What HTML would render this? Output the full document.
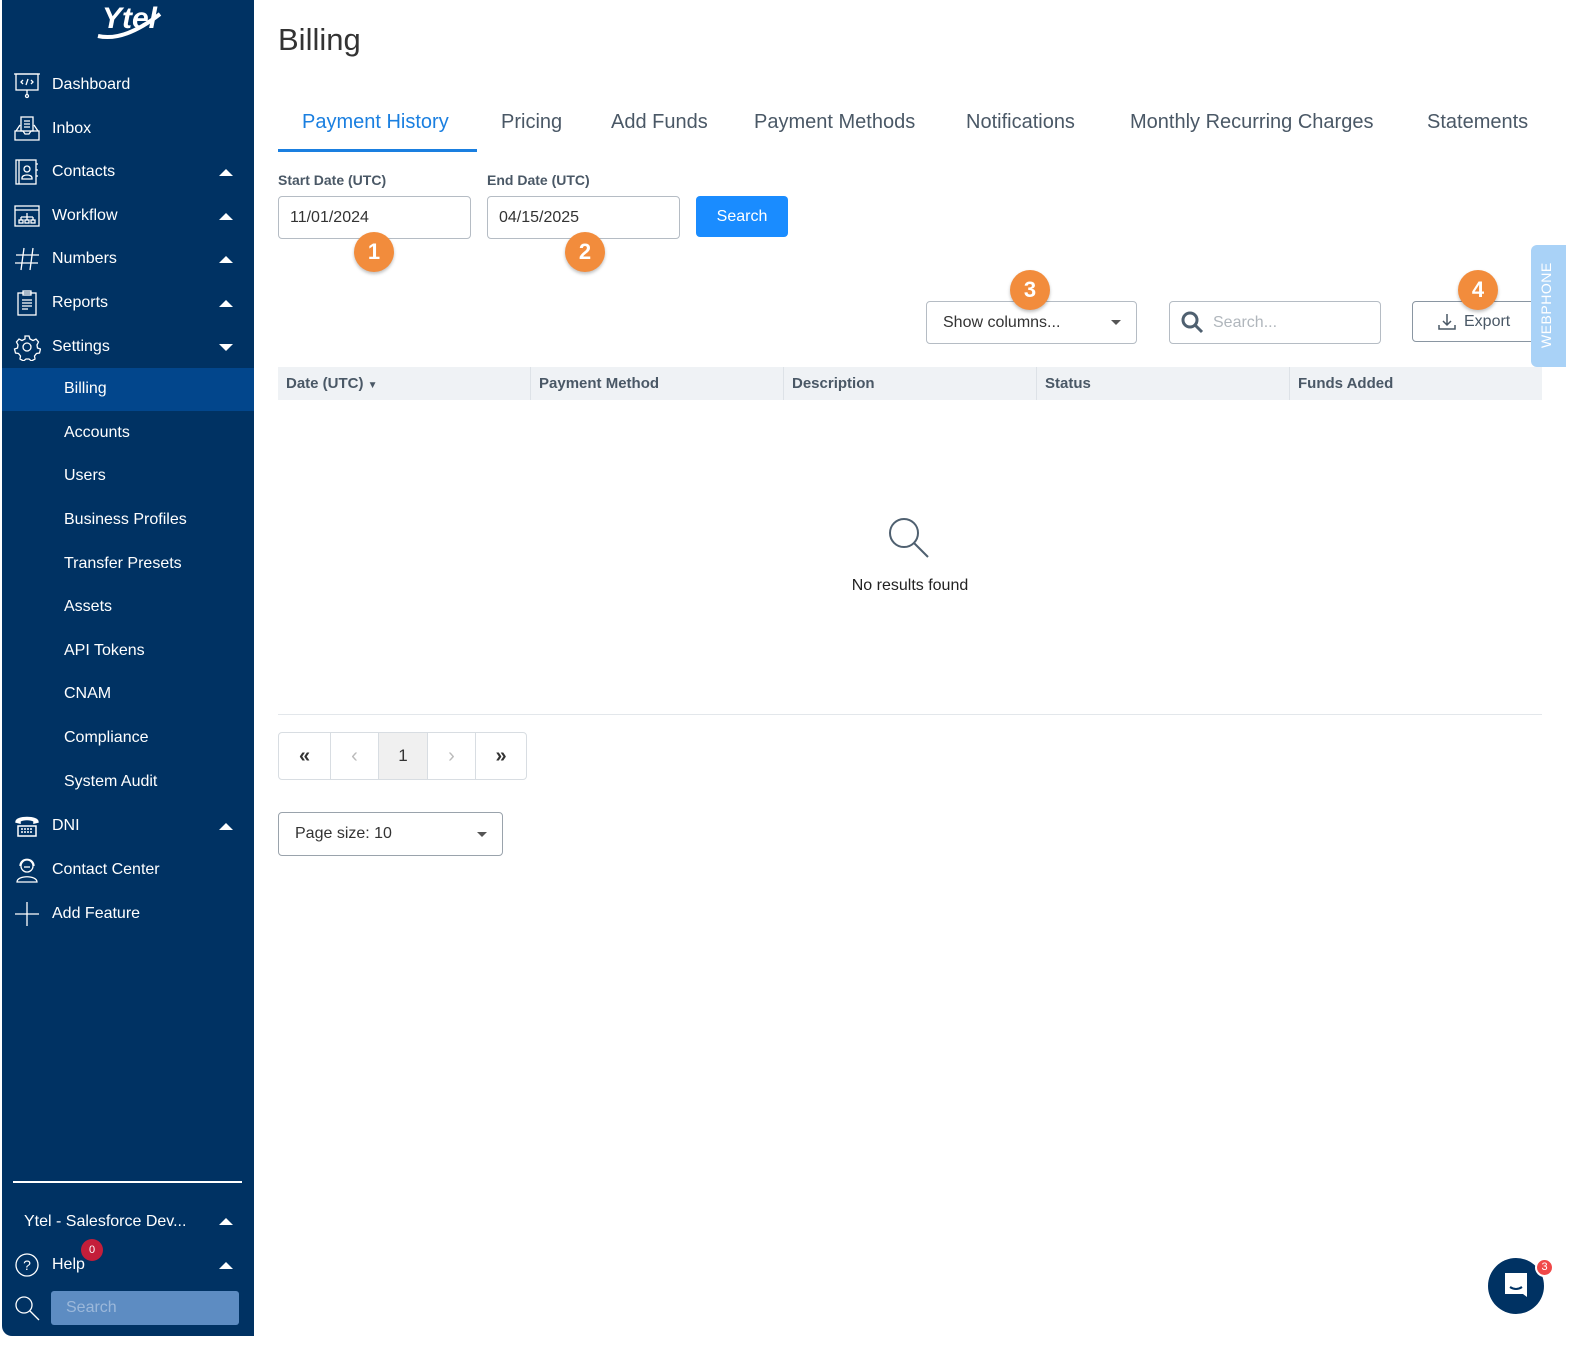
<!DOCTYPE html>
<html><head><meta charset="utf-8"><style>
*{box-sizing:border-box;margin:0;padding:0}
body{width:1588px;height:1353px;background:#fff;font-family:"Liberation Sans",sans-serif;position:relative;overflow:hidden;color:#333}
.a{position:absolute}
#sb{position:absolute;left:2px;top:0;width:252px;height:1336px;background:#003263;border-bottom-left-radius:10px}
.it{position:absolute;left:52px;color:#fff;font-size:16px;line-height:20px;white-space:nowrap}
.sub{left:64px}
.car{position:absolute;left:219px;width:0;height:0;border-left:7px solid transparent;border-right:7px solid transparent}
.up{border-bottom:7px solid #fff}
.dn{border-top:7px solid #fff}
.ic{position:absolute;left:13px;width:28px;height:28px}
.tab{position:absolute;top:109px;font-size:20px;color:#4a5866;line-height:26px}
.lbl{position:absolute;font-size:14px;font-weight:bold;color:#4a5866}
.inp{position:absolute;border:1px solid #b5bcc4;border-radius:4px;background:#fff;font-size:16px;color:#333;padding-left:11px;line-height:41px}
.badge{position:absolute;width:40px;height:40px;border-radius:50%;background:#f28c3c;color:#fff;font-size:22px;font-weight:bold;text-align:center;line-height:40px;box-shadow:0 2px 3px rgba(0,0,0,.25)}
.th{position:absolute;top:367px;height:33px;line-height:33px;font-size:15px;font-weight:bold;color:#4a5866;padding-left:8px;border-left:1px solid #dde2e7}
</style></head><body>
<div id="sb">
<svg class="a" style="left:92px;top:0" width="72" height="42" viewBox="0 0 72 42"><text x="8" y="28" fill="#fff" font-family="Liberation Sans" font-weight="bold" font-size="30" font-style="italic">Ytel</text><path d="M4 36 Q30 42 66 14" stroke="#fff" stroke-width="4" fill="none"/></svg>
</div>
<svg class="ic" style="top:71px" viewBox="0 0 28 28" fill="none" stroke="#fff" stroke-width="1.3"><rect x="3" y="3" width="22" height="16"/><path d="M1 3h26M14 19v4"/><circle cx="14" cy="25" r="1.5"/><path d="M10 9l-2 2 2 2M18 9l2 2-2 2M15 8l-2 6"/></svg>
<svg class="ic" style="top:115px" viewBox="0 0 28 28" fill="none" stroke="#fff" stroke-width="1.3"><rect x="8" y="2" width="12" height="14"/><path d="M11 6h6M11 9h6M11 12h6M3 16l4-6M25 16l-4-6M2 16h8l2 3h4l2-3h8v9H2z"/></svg>
<svg class="ic" style="top:158px" viewBox="0 0 28 28" fill="none" stroke="#fff" stroke-width="1.3"><rect x="3" y="2" width="20" height="24"/><path d="M6 2v24M23 6h2M23 12h2M23 18h2"/><circle cx="14" cy="11" r="3"/><path d="M9 20c0-4 10-4 10 0v1H9z"/></svg>
<svg class="ic" style="top:202px" viewBox="0 0 28 28" fill="none" stroke="#fff" stroke-width="1.3"><rect x="2" y="4" width="24" height="20"/><path d="M2 8h24M14 11v4M8 15h12M8 15v3M14 15v3M20 15v3"/><rect x="6" y="18" width="4" height="3"/><rect x="12" y="18" width="4" height="3"/><rect x="18" y="18" width="4" height="3"/></svg>
<svg class="ic" style="top:245px" viewBox="0 0 28 28" fill="none" stroke="#fff" stroke-width="1.3"><path d="M11 3L8 25M20 3L17 25M3 10h23M2 18h23"/></svg>
<svg class="ic" style="top:289px" viewBox="0 0 28 28" fill="none" stroke="#fff" stroke-width="1.3"><rect x="5" y="4" width="18" height="22"/><rect x="10" y="2" width="8" height="4"/><path d="M9 11h10M9 14h10M9 17h10M9 20h6"/></svg>
<svg class="ic" style="top:333px" viewBox="0 0 28 28" fill="none" stroke="#fff" stroke-width="1.3"><circle cx="14" cy="14" r="4"/><path d="M12 3h4l1 3 3 1.5 3-1.5 2.5 3-1.5 3 .5 3 3 1v0l-1 4-3 .5-2 2.5.5 3-3.5 2-2.5-2h-3l-2.5 2-3.5-2 .5-3-2-2.5-3-.5-1-4 3-1 .5-3-1.5-3 2.5-3 3 1.5 3-1.5z"/></svg>
<svg class="ic" style="top:812px" viewBox="0 0 28 28" fill="none" stroke="#fff" stroke-width="1.5"><path d="M3 10c0-6 22-6 22 0l-4 1v-2c-4-2-10-2-14 0v2z" fill="#fff"/><path d="M5 14h18v10H5z"/><path d="M8 17h12M8 20h12" stroke-dasharray="2 1"/></svg>
<svg class="ic" style="top:856px" viewBox="0 0 28 28" fill="none" stroke="#fff" stroke-width="1.3"><circle cx="14" cy="10" r="6"/><path d="M7 10c0-9 14-9 14 0M4 26c0-7 20-7 20 0z"/><path d="M11 11h6"/></svg>
<svg class="ic" style="top:900px" viewBox="0 0 28 28" fill="none" stroke="#fff" stroke-width="1.3"><path d="M14 2v24M2 14h24"/></svg>
<div class="a" style="left:2px;top:368px;width:252px;height:43px;background:#02468c"></div>
<div class="it" style="top:75px">Dashboard</div>
<div class="it" style="top:119px">Inbox</div>
<div class="it" style="top:162px">Contacts</div><div class="car up" style="top:169px"></div>
<div class="it" style="top:206px">Workflow</div><div class="car up" style="top:213px"></div>
<div class="it" style="top:249px">Numbers</div><div class="car up" style="top:256px"></div>
<div class="it" style="top:293px">Reports</div><div class="car up" style="top:300px"></div>
<div class="it" style="top:337px">Settings</div><div class="car dn" style="top:344px"></div>
<div class="it sub" style="top:379px">Billing</div>
<div class="it sub" style="top:423px">Accounts</div>
<div class="it sub" style="top:466px">Users</div>
<div class="it sub" style="top:510px">Business Profiles</div>
<div class="it sub" style="top:554px">Transfer Presets</div>
<div class="it sub" style="top:597px">Assets</div>
<div class="it sub" style="top:641px">API Tokens</div>
<div class="it sub" style="top:684px">CNAM</div>
<div class="it sub" style="top:728px">Compliance</div>
<div class="it sub" style="top:772px">System Audit</div>
<div class="it" style="top:816px">DNI</div><div class="car up" style="top:823px"></div>
<div class="it" style="top:860px">Contact Center</div>
<div class="it" style="top:904px">Add Feature</div>
<div class="a" style="left:13px;top:1181px;width:229px;height:2px;background:#fff"></div>
<div class="it" style="left:24px;top:1212px">Ytel - Salesforce Dev...</div><div class="car up" style="top:1218px"></div>
<svg class="ic" style="top:1251px" viewBox="0 0 28 28" fill="none" stroke="#fff" stroke-width="1.3"><circle cx="14" cy="14" r="11"/><text x="14" y="19" fill="#fff" stroke="none" font-size="14" text-anchor="middle" font-family="Liberation Sans">?</text></svg>
<div class="it" style="top:1255px">Help</div><div class="car up" style="top:1262px"></div>
<div class="a" style="left:81px;top:1239px;width:22px;height:22px;border-radius:50%;background:#c41e3a;color:#fff;font-size:11px;text-align:center;line-height:22px">0</div>
<svg class="ic" style="top:1294px" viewBox="0 0 28 28" fill="none" stroke="#fff" stroke-width="1.3"><circle cx="11" cy="11" r="8"/><path d="M17 17l9 9"/></svg>
<div class="a" style="left:51px;top:1291px;width:188px;height:34px;background:#5d8cc2;border-radius:3px;color:#9cb8da;font-size:16px;line-height:34px;padding-left:15px">Search</div>

<div class="a" style="left:278px;top:22px;font-size:31px;color:#333">Billing</div>
<div class="tab" style="left:302px;color:#1a7fe0">Payment History</div>
<div class="a" style="left:278px;top:149px;width:199px;height:3px;background:#1a7fe0"></div>
<div class="tab" style="left:501px">Pricing</div>
<div class="tab" style="left:611px">Add Funds</div>
<div class="tab" style="left:754px">Payment Methods</div>
<div class="tab" style="left:966px">Notifications</div>
<div class="tab" style="left:1130px">Monthly Recurring Charges</div>
<div class="tab" style="left:1427px">Statements</div>

<div class="lbl" style="left:278px;top:172px">Start Date (UTC)</div>
<div class="lbl" style="left:487px;top:172px">End Date (UTC)</div>
<div class="inp" style="left:278px;top:196px;width:193px;height:43px">11/01/2024</div>
<div class="inp" style="left:487px;top:196px;width:193px;height:43px">04/15/2025</div>
<div class="a" style="left:696px;top:196px;width:92px;height:41px;background:#1a8cff;border-radius:4px;color:#fff;font-size:16px;text-align:center;line-height:41px">Search</div>
<div class="badge" style="left:354px;top:232px">1</div>
<div class="badge" style="left:565px;top:232px">2</div>

<div class="inp" style="left:926px;top:301px;width:211px;height:43px;padding-left:16px">Show columns...</div>
<div class="a" style="left:1111px;top:320px;border-left:5px solid transparent;border-right:5px solid transparent;border-top:5px solid #555"></div>
<div class="inp" style="left:1169px;top:301px;width:212px;height:43px;padding-left:43px;color:#b0b6bc">Search...</div>
<svg class="a" style="left:1180px;top:310px" width="26" height="26" viewBox="0 0 26 26" fill="none" stroke="#4f6070" stroke-width="3"><circle cx="10" cy="10" r="7"/><path d="M15 15l7 7"/></svg>
<div class="inp" style="left:1412px;top:301px;width:129px;height:41px;padding-left:51px;line-height:39px;color:#4a5866;border-color:#8a96a2;font-size:16px">Export</div>
<svg class="a" style="left:1437px;top:312px" width="20" height="20" viewBox="0 0 20 20" fill="none" stroke="#4a5866" stroke-width="1.5"><path d="M10 2v11M6 9l4 4 4-4M2 13v4h16v-4"/></svg>
<div class="badge" style="left:1010px;top:270px">3</div>
<div class="badge" style="left:1458px;top:270px">4</div>
<div class="a" style="left:1531px;top:245px;width:35px;height:122px;background:#a9d2f7;border-radius:6px 0 0 6px"></div>
<div class="a" style="left:1538px;top:348px;transform:rotate(-90deg);transform-origin:0 0;color:#fff;font-size:14px;width:100px;letter-spacing:.5px">WEBPHONE</div>

<div class="a" style="left:278px;top:367px;width:1264px;height:33px;background:#eff2f5"></div>
<div class="th" style="left:278px;border-left:0">Date (UTC) <span style="font-size:10px">▼</span></div>
<div class="th" style="left:530px">Payment Method</div>
<div class="th" style="left:783px">Description</div>
<div class="th" style="left:1036px">Status</div>
<div class="th" style="left:1289px">Funds Added</div>

<svg class="a" style="left:884px;top:514px" width="48" height="48" viewBox="0 0 48 48" fill="none" stroke="#4f6070" stroke-width="2"><circle cx="20" cy="19" r="14"/><path d="M30 29l14 14"/></svg>
<div class="a" style="left:810px;top:577px;width:200px;text-align:center;font-size:16px;color:#222">No results found</div>
<div class="a" style="left:278px;top:714px;width:1264px;height:1px;background:#e3e7eb"></div>

<div class="a" style="left:278px;top:732px;width:249px;height:48px;border:1px solid #d8dde2;border-radius:4px;font-size:17px;color:#333;display:flex">
<div style="width:51px;text-align:center;line-height:46px;font-weight:bold;font-size:20px">«</div>
<div style="width:48px;text-align:center;line-height:46px;border-left:1px solid #d8dde2;color:#bbb;font-size:20px">‹</div>
<div style="width:49px;text-align:center;line-height:46px;border-left:1px solid #d8dde2;background:#f0f0f0">1</div>
<div style="width:48px;text-align:center;line-height:46px;border-left:1px solid #d8dde2;color:#bbb;font-size:20px">›</div>
<div style="width:51px;text-align:center;line-height:46px;border-left:1px solid #d8dde2;font-weight:bold;font-size:20px">»</div>
</div>
<div class="inp" style="left:278px;top:812px;width:225px;height:44px;padding-left:16px;border-color:#9aa3ac;font-size:16px">Page size: 10</div>
<div class="a" style="left:477px;top:832px;border-left:5px solid transparent;border-right:5px solid transparent;border-top:5px solid #555"></div>

<div class="a" style="left:1488px;top:1258px;width:56px;height:56px;border-radius:50%;background:#003263"></div>
<svg class="a" style="left:1502px;top:1271px" width="28" height="30" viewBox="0 0 28 30"><path d="M3 2h22v24l-4-3H3z" fill="#fff"/><path d="M8 16q6 4 12 0" stroke="#003263" stroke-width="2" fill="none"/></svg>
<div class="a" style="left:1535px;top:1258px;width:19px;height:19px;border-radius:50%;background:#f04848;border:2px solid #fff;color:#fff;font-size:11px;text-align:center;line-height:15px">3</div>
</body></html>
